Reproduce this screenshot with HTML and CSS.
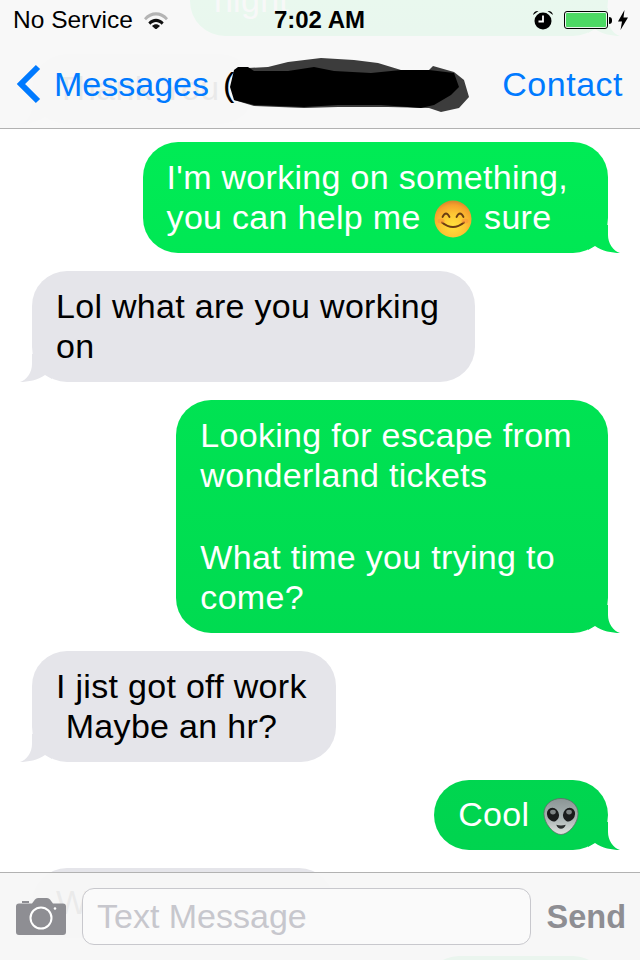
FILE: index.html
```html
<!DOCTYPE html>
<html lang="en">
<head>
  <meta charset="UTF-8">
  <meta name="viewport" content="width=device-width, initial-scale=1.0">
  <title>Messages</title>
  <link rel="stylesheet" href="styles.css">
</head>
<body>
  <div class="thread">
    <div class="bubble sent">Can we go Friday at 10<br>night<span class="tail"></span></div>
    <div class="bubble received single">Thank You<span class="tail"></span></div>
    <div class="bubble sent wide">I'm working on something,<br>you can help me
      <svg class="emoji smile" viewBox="0 0 38 38">
        <defs>
          <radialGradient id="smileFace" cx="50%" cy="68%" r="66%">
            <stop offset="0" stop-color="#ffe23c"/>
            <stop offset="0.5" stop-color="#fdc533"/>
            <stop offset="0.85" stop-color="#f6a02c"/>
            <stop offset="1" stop-color="#d98a2c"/>
          </radialGradient>
        </defs>
        <circle cx="19" cy="19" r="18.500" fill="url(#smileFace)"/>
        <path d="M8.500 17q3.500-7 7 0M22.500 17q3.500-7 7 0" fill="none" stroke="#6b3d12" stroke-width="1.800" stroke-linecap="round"/>
        <path d="M8 22.500q11 9 22 0" fill="none" stroke="#6b3d12" stroke-width="2" stroke-linecap="round"/>
        <ellipse cx="7" cy="21" rx="3.500" ry="2.500" fill="#fb8a3c" opacity=".5"/>
        <ellipse cx="31" cy="21" rx="3.500" ry="2.500" fill="#fb8a3c" opacity=".5"/>
      </svg>
      sure<span class="tail"></span></div>
    <div class="bubble received">Lol what are you working<br>on<span class="tail"></span></div>
    <div class="bubble sent">Looking for escape from<br>wonderland tickets<span class="para-gap"></span>What time you trying to<br>come?<span class="tail"></span></div>
    <div class="bubble received tight">I jist got off work<br>&nbsp;Maybe an hr?<span class="tail"></span></div>
    <div class="bubble sent single cool">Cool
      <svg class="emoji alien" viewBox="0 0 38 38" preserveAspectRatio="none">
        <defs>
          <linearGradient id="alienHead" x1="0" y1="0" x2="0" y2="1">
            <stop offset="0" stop-color="#8b9595"/>
            <stop offset="0.55" stop-color="#aab3b3"/>
            <stop offset="1" stop-color="#dfe3df"/>
          </linearGradient>
        </defs>
        <path d="M19 .5c10 0 18 6.500 18 15.500 0 10-10 21.500-18 21.500S1 26 1 16C1 7 9 .5 19 .5z" fill="url(#alienHead)" stroke="#5f6867" stroke-width=".8"/>
        <ellipse cx="10.500" cy="17" rx="6.200" ry="7.200" fill="#1a1c1c" transform="rotate(-25 10.500 17)"/>
        <ellipse cx="27.500" cy="17" rx="6.200" ry="7.200" fill="#1a1c1c" transform="rotate(25 27.500 17)"/>
        <ellipse cx="10.500" cy="14.500" rx="3" ry="2.500" fill="#7d8383"/>
        <ellipse cx="27.500" cy="14.500" rx="3" ry="2.500" fill="#7d8383"/>
        <path d="M14 27.500q5 1.500 10 0q-1.500 4-5 4t-5-4z" fill="#2b2f2f"/>
      </svg><span class="tail"></span></div>
    <div class="bubble received single">What about you<span class="tail"></span></div>
    <div class="bubble sent single">Yeah ok<span class="tail"></span></div>
  </div>

  <header class="top-bar">
    <div class="status">
      <div class="status-left">
        <span>No Service</span>
        <svg class="wifi" viewBox="0 0 24 17">
          <path d="M0 6.200C6.500-1.600 17.500-1.600 24 6.200l-2 2.100C16.500 2 7.500 2 2 8.300z" fill="#b4b4b4"/>
          <path d="M4.300 10.600c4.500-5 10.900-5 15.400 0l-2 2.100c-3.500-3.700-7.900-3.700-11.400 0z" fill="#111"/>
          <path d="M8 14c2.400-2.300 5.600-2.300 8 0l-4 3.500z" fill="#111"/>
        </svg>
      </div>
      <div class="clock">7:02 AM</div>
      <div class="status-right">
        <svg class="alarm" viewBox="0 0 20 20">
          <circle cx="10" cy="11" r="8.500" fill="#000"/>
          <path d="M10 5.500V11.500H5.500" fill="none" stroke="#fff" stroke-width="1.800"/>
          <path d="M0 5Q1 .5 5.500 1zM20 5Q19 .5 14.500 1z" fill="#000"/>
        </svg>
        <div class="battery"><div class="battery-fill"></div></div>
        <div class="battery-cap"></div>
        <svg class="bolt" viewBox="0 0 10 20">
          <path d="M6.500 0L0 11.500H4L2.500 20 10 7.500H5.500z" fill="#000"/>
        </svg>
      </div>
    </div>
    <nav class="nav">
      <div class="back">
        <svg class="chevron" viewBox="0 0 26 40">
          <path d="M22 3L5 20l17 17" fill="none" stroke="#007aff" stroke-width="6"/>
        </svg>
        <span>Messages</span>
      </div>
      <div class="title">
        <span class="paren">(</span>
        <svg class="scribble" viewBox="0 0 244 62">
          <path d="M5 16L19 14 39 13 59 8 92 4 125 6 149 9 172 16H200L204 12 225 18 235 26 240 43 230 54 212 58 200 54 159 53H109L75 54 25 52 5 46z" fill="#3c3c3c"/>
          <path d="M5 16L9 13H19L25 17H59L85 13 105 17 142 19 172 16H200L225 19 230 33 222 41 205 51 192 54 152 51H109L75 53 25 51 5 46 1 33z" fill="#000"/>
        </svg>
      </div>
      <span class="contact">Contact</span>
    </nav>
  </header>

  <footer class="composer">
    <svg class="camera" viewBox="0 0 50 37">
      <path d="M6 3h7v2H6z" fill="#8e8e93"/>
      <path d="M3 5.500H16L19 1.500Q20 0 22 0H31Q33 0 34 1.500L37 5.500H47Q50 5.500 50 8.500V34Q50 37 47 37H3Q0 37 0 34V8.500Q0 5.500 3 5.500z" fill="#8e8e93"/>
      <circle cx="25" cy="20" r="10.500" fill="none" stroke="#fff" stroke-width="2"/>
      <circle cx="39" cy="10.500" r="1.300" fill="#fff"/>
    </svg>
    <div class="field">Text Message</div>
    <span class="send">Send</span>
  </footer>
</body>
</html>
```

FILE: styles.css
```css
body {
  margin: 0;
  width: 640px;
  height: 960px;
  overflow: hidden;
  position: relative;
  background-color: #fff;
  font-family: "Liberation Sans", Arial, sans-serif;
}

/* the thread runs under both translucent bars */
.thread {
  display: flex;
  flex-direction: column;
  align-items: flex-start;
  gap: 18px;
  box-sizing: border-box;
  height: 1035px;
  margin-top: -75px;
  padding: 0 32px;
  overflow: hidden;
}

.bubble {
  position: relative;
  flex-shrink: 0;
  padding: 15px 36px 16px 24px;
  border-radius: 35px;
  font-size: 34px;
  letter-spacing: 0.3px;
  line-height: 40px;
  white-space: nowrap;
}

.single {
  padding-top: 14px;
}

.wide {
  padding-right: 40px;
}

.tight {
  padding-right: 29px;
}

.cool {
  padding-right: 25px;
}

.para-gap {
  display: block;
  height: 42px;
}

.sent,
.sent .tail {
  background: linear-gradient(#00f056 0, #00d04e 960px) fixed;
}

.sent {
  align-self: flex-end;
  color: #fff;
}

.received {
  background-color: #e5e5ea;
  color: #000;
}

.tail {
  position: absolute;
  bottom: 0;
  width: 32px;
  height: 28px;
  clip-path: path("M20 0V10C20 18 25 26 32 28C24 28 14 26 7 21L0 25V0z");
}

.sent .tail {
  right: -12px;
}

.received .tail {
  left: -12px;
  background-color: #e5e5ea;
  transform: scaleX(-1);
}

.emoji {
  width: 38px;
  height: 38px;
  margin: -2px 4px;
  vertical-align: -7px;
}

.smile {
  margin-right: 2px;
}

.alien {
  width: 36px;
  height: 37px;
}

.top-bar {
  position: absolute;
  top: 0;
  left: 0;
  width: 640px;
  height: 128px;
  border-bottom: 1px solid #b2b2b2;
  background-color: rgba(248, 248, 248, 0.94);
}

.status {
  display: flex;
  align-items: center;
  justify-content: space-between;
  height: 40px;
  padding: 0 12px 0 13px;
  font-size: 24.5px;
  color: #000;
}

.status-left {
  display: flex;
  align-items: center;
  gap: 11px;
  width: 260px;
}

.wifi {
  width: 24px;
  height: 17px;
}

.clock {
  font-size: 24px;
  font-weight: bold;
  margin-left: -2px;
}

.status-right {
  display: flex;
  align-items: center;
  justify-content: flex-end;
  width: 260px;
}

.alarm {
  width: 20px;
  height: 20px;
  margin-right: 11px;
}

.battery {
  width: 44px;
  height: 18px;
  box-sizing: border-box;
  padding: 1px;
  border: 1px solid #000;
  border-radius: 3px;
}

.battery-fill {
  height: 100%;
  border-radius: 1px;
  background-color: #4cd964;
}

.battery-cap {
  width: 3px;
  height: 7px;
  margin-left: 1px;
  border-radius: 0 3px 3px 0;
  background-color: #000;
}

.bolt {
  width: 10px;
  height: 20px;
  margin-left: 6px;
}

.nav {
  display: flex;
  align-items: center;
  height: 88px;
  padding: 0 17px 0 16px;
  box-sizing: border-box;
  font-size: 34px;
  color: #007aff;
}

.back {
  display: flex;
  align-items: center;
  gap: 12px;
}

.chevron {
  width: 26px;
  height: 40px;
}

.title {
  display: flex;
  align-items: center;
  margin-left: 14px;
  color: #000;
}

.scribble {
  width: 244px;
  height: 62px;
  margin: 2px 0 0 -5px;
}

.contact {
  margin-left: auto;
  letter-spacing: 0.5px;
}

.composer {
  position: absolute;
  left: 0;
  bottom: 0;
  display: flex;
  align-items: center;
  box-sizing: border-box;
  width: 640px;
  height: 88px;
  padding: 0 14px 0 16px;
  border-top: 1px solid #b2b2b2;
  background-color: rgba(247, 247, 247, 0.95);
}

.camera {
  width: 50px;
  height: 37px;
  margin-right: 16px;
  flex-shrink: 0;
}

.field {
  box-sizing: border-box;
  width: 449px;
  height: 57px;
  padding-left: 14px;
  border: 1px solid #c8c8cd;
  border-radius: 12px;
  background-color: #fafafa;
  font-size: 34px;
  line-height: 55px;
  color: #c7c7cd;
}

.send {
  margin: 2px 0 0 auto;
  font-size: 32.5px;
  font-weight: bold;
  color: #8e8e93;
}
```
